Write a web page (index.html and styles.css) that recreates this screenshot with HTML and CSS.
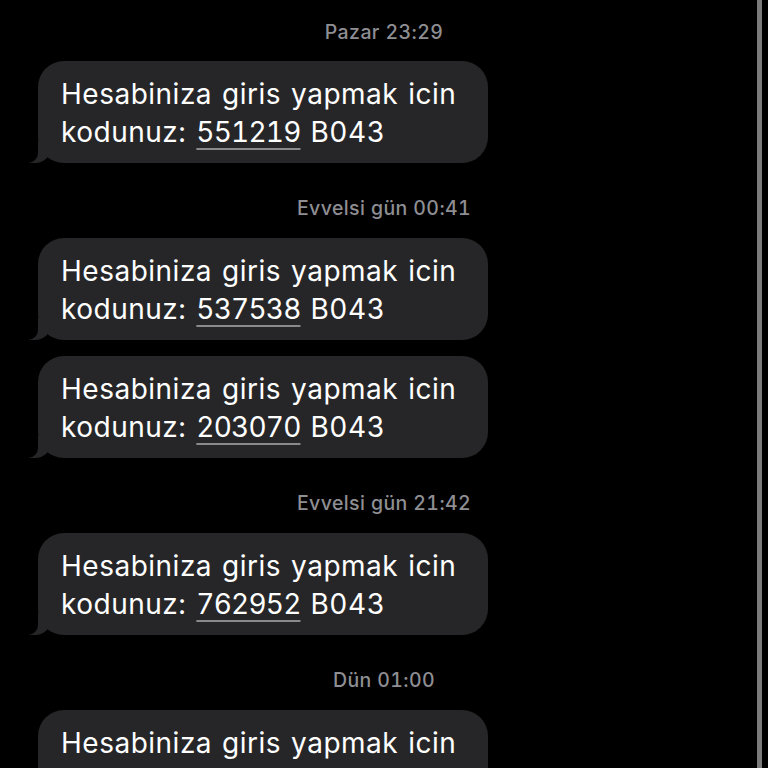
FILE: index.html
```html
<!DOCTYPE html>
<html lang="tr">
<head>
    <meta charset="UTF-8">
    <meta name="viewport" content="width=device-width, initial-scale=1.0">
    <title>Mesajlar</title>
    <link rel="stylesheet" href="styles.css">
</head>
<body>
    <div class="thread">
        <div class="stamp">Pazar 23:29</div>
        <div class="bubble">Hesabiniza giris yapmak icin kodunuz: <span class="code">551219</span> B043</div>

        <div class="stamp">Evvelsi gün 00:41</div>
        <div class="bubble">Hesabiniza giris yapmak icin kodunuz: <span class="code">537538</span> B043</div>
        <div class="bubble">Hesabiniza giris yapmak icin kodunuz: <span class="code">203070</span> B043</div>

        <div class="stamp">Evvelsi gün 21:42</div>
        <div class="bubble">Hesabiniza giris yapmak icin kodunuz: <span class="code">762952</span> B043</div>

        <div class="stamp">Dün 01:00</div>
        <div class="bubble">Hesabiniza giris yapmak icin kodunuz: <span class="code">176304</span> B043</div>
    </div>
    <div class="scrollbar"></div>
</body>
</html>
```

FILE: styles.css
```css
:root {
    --bg: #000000;
    --bubble: #262628;
    --text: #ffffff;
    --muted: #8e8e93;
    --link-line: #8a8a8e;
}

* {
    margin: 0;
    padding: 0;
    box-sizing: border-box;
}

body {
    background: var(--bg);
    color: var(--text);
    font-family: Inter, "Liberation Sans", Arial, sans-serif;
    font-variant-numeric: tabular-nums;
    height: 768px;
    overflow: hidden;
}

.thread {
    display: flex;
    flex-direction: column;
    padding-top: 20px;
}

.stamp {
    text-align: center;
    font-size: 19.5px;
    font-weight: 500;
    letter-spacing: 0.4px;
    line-height: 24px;
    color: var(--muted);
    margin: 33px 0 18px;
}

.stamp:first-child {
    margin-top: 0;
    margin-bottom: 17px;
}

.bubble {
    position: relative;
    width: 450px;
    margin-left: 38px;
    padding: 14px 10px 12px 23px;
    background: var(--bubble);
    border-radius: 26px;
    font-size: 28px;
    letter-spacing: 0.5px;
    word-spacing: 2px;
    line-height: 38px;
}

.bubble + .bubble {
    margin-top: 16px;
}

/* tail */
.bubble::before {
    content: "";
    position: absolute;
    bottom: 0;
    left: -9px;
    width: 23px;
    height: 22px;
    background: var(--bubble);
    border-bottom-right-radius: 17px;
}

.bubble::after {
    content: "";
    position: absolute;
    bottom: 0;
    left: -14px;
    width: 14px;
    height: 22px;
    background: var(--bg);
    border-bottom-right-radius: 10px;
}

.code {
    letter-spacing: -0.8px;
    text-decoration: underline;
    text-decoration-color: var(--link-line);
    text-decoration-thickness: 2px;
    text-underline-offset: 6px;
}

.scrollbar {
    position: fixed;
    top: 0;
    right: 6px;
    width: 5px;
    height: 100%;
    background: #7b7b7b;
}
```
